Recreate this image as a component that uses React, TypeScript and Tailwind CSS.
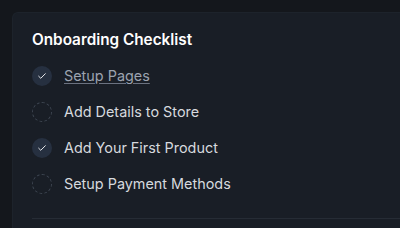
import React from "react";

const items = [
  { label: "Setup Pages", done: true, link: true },
  { label: "Add Details to Store", done: false },
  { label: "Add Your First Product", done: true },
  { label: "Setup Payment Methods", done: false },
];

function Check() {
  return (
    <svg width="10" height="10" viewBox="0 0 24 24" fill="none" stroke="#e5e7eb" strokeWidth="2.4" strokeLinecap="round" strokeLinejoin="round">
      <path d="M4 12.5l5 5L20 6.5" />
    </svg>
  );
}

export default function App() {
  return (
    <div
      className="w-[400px] h-[228px] overflow-hidden bg-[#14171c] pt-3 pl-3"
      style={{ fontFamily: "Inter, 'Noto Sans', sans-serif" }}
    >
      <div className="h-[240px] bg-[#191e26] border-l border-t border-[#1d232b] rounded-tl-md pt-[19px] pl-[19px]">
        <h2 className="text-[15.3px] leading-4 font-semibold text-white mb-[18px]">Onboarding Checklist</h2>
        <div className="flex flex-col gap-4">
          {items.map((it) => (
            <div key={it.label} className="flex items-center gap-3 h-5">
              {it.done ? (
                <div className="w-5 h-5 rounded-full bg-[#263040] flex items-center justify-center">
                  <Check />
                </div>
              ) : (
                <div className="w-5 h-5 rounded-full border border-dashed border-[#3f4753]" />
              )}
              <span
                className={
                  it.link
                    ? "text-[14.4px] leading-5 text-[#9ca3af] underline underline-offset-2 decoration-[#6b7280]"
                    : "text-[14.4px] leading-5 text-[#d6d9de]"
                }
              >
                {it.label}
              </span>
            </div>
          ))}
        </div>
        <div className="mt-6 h-px bg-[#262c35]" />
      </div>
    </div>
  );
}
